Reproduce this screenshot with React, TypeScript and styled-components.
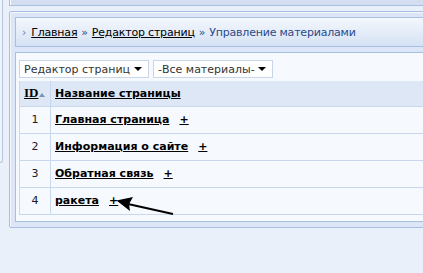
import React from "react";
import styled, { createGlobalStyle } from "styled-components";

const GlobalStyle = createGlobalStyle`
  html, body {
    margin: 0;
    padding: 0;
    background: #eaf0fa;
    overflow: hidden;
  }
  body {
    font-family: "DejaVu Sans", Verdana, sans-serif;
    font-size: 11px;
    color: #000;
  }
`;

interface Page {
  id: number;
  title: string;
}

const pages: Page[] = [
  { id: 1, title: "Главная страница" },
  { id: 2, title: "Информация о сайте" },
  { id: 3, title: "Обратная связь" },
  { id: 4, title: "ракета" },
];

const App: React.FC = () => {
  return (
    <>
      <GlobalStyle />
      <Layout>
        <Sidebar />
        <Main>
          <TopPanel />
          <Panel>
            <Breadcrumbs>
              <Chevron>›</Chevron>
              <Crumb href="#">Главная</Crumb>
              <Sep>»</Sep>
              <Crumb href="#">Редактор страниц</Crumb>
              <Sep>»</Sep>
              <Current>Управление материалами</Current>
            </Breadcrumbs>
            <Content>
              <Filters>
                <Select width={130}>
                  Редактор страниц
                  <Caret />
                </Select>
                <Select width={120}>
                  -Все материалы-
                  <Caret />
                </Select>
              </Filters>
              <Table>
                <thead>
                  <HeadRow>
                    <IdHead>
                      <IdLabel href="#">ID</IdLabel>
                      <SortMark />
                    </IdHead>
                    <NameHead>
                      <Link href="#">Название страницы</Link>
                    </NameHead>
                  </HeadRow>
                </thead>
                <tbody>
                  {pages.map((p) => (
                    <Row key={p.id}>
                      <IdCell>{p.id}</IdCell>
                      <NameCell>
                        <Link href="#">{p.title}</Link>
                        <Plus href="#">+</Plus>
                      </NameCell>
                    </Row>
                  ))}
                </tbody>
              </Table>
            </Content>
          </Panel>
        </Main>
      </Layout>
      <Pointer width="60" height="20" viewBox="0 0 60 20">
        <path d="M57 17 L12 7" stroke="#000" strokeWidth="2" fill="none" />
        <path d="M0.5 3.5 L17 0 L13 7 L14 14 Z" fill="#000" />
      </Pointer>
    </>
  );
};

const Layout = styled.div`
  display: flex;
  align-items: flex-start;
  width: 900px;
`;

const Sidebar = styled.div`
  width: 2px;
  height: 162px;
  background: #eef3fb;
  border-right: 1px solid #b7c7e0;
  border-bottom: 1px solid #b7c7e0;
  border-bottom-right-radius: 3px;
`;

const Main = styled.div`
  flex: 1;
  margin-left: 6px;
  display: flex;
  flex-direction: column;
  gap: 5px;
`;

const TopPanel = styled.div`
  height: 5px;
  background: #d3dff1;
  border: 1px solid #a8bfe4;
  border-top: none;
  box-shadow: inset 1px 0 0 #fff;
`;

const Panel = styled.div`
  background: #dce6f6;
  border: 1px solid #a8bfe4;
  border-radius: 2px;
  box-shadow: inset 1px 1px 0 #f4f7fc;
  padding: 5px;
  display: flex;
  flex-direction: column;
  gap: 5px;
`;

const Breadcrumbs = styled.div`
  height: 28px;
  border: 1px solid #a8bfe4;
  background: linear-gradient(#f4f7fd, #d5e2f4);
  display: flex;
  align-items: center;
  padding-left: 6px;
  gap: 4px;
  font-size: 11px;
  letter-spacing: -0.2px;
`;

const Chevron = styled.span`
  color: #5b7fb8;
  font-size: 11px;
  margin-right: 1px;
`;

const Crumb = styled.a`
  color: #000;
  text-decoration: underline;
`;

const Sep = styled.span`
  color: #2a4a8a;
`;

const Current = styled.span`
  color: #2a4a8a;
`;

const Content = styled.div`
  background: #f6f9fe;
  border: 1px solid #a8bfe4;
  padding: 7px 3px 6px 3px;
  display: flex;
  flex-direction: column;
  gap: 3px;
`;

const Filters = styled.div`
  display: flex;
  gap: 4px;
`;

const Select = styled.div<{ width: number }>`
  width: ${(p) => p.width}px;
  height: 18px;
  box-sizing: border-box;
  background: #fff;
  border: 1px solid #c9d6ea;
  display: flex;
  align-items: center;
  justify-content: space-between;
  padding: 0 6px 0 4px;
  color: #333;
  font-size: 11px;
`;

const Caret = styled.span`
  width: 0;
  height: 0;
  border-left: 4px solid transparent;
  border-right: 4px solid transparent;
  border-top: 4px solid #000;
`;

const Table = styled.table`
  width: 100%;
  border-collapse: collapse;
  border-left: 1px solid #c9d7ee;
`;

const HeadRow = styled.tr`
  background: #dde7f6;
  height: 25px;
  border-bottom: 1px solid #c9d7ee;
`;

const IdHead = styled.th`
  width: 26px;
  padding: 0 0 0 4px;
  text-align: left;
  border-right: 1px solid #c9d7ee;
  white-space: nowrap;
`;

const IdLabel = styled.a`
  font-family: "Liberation Serif", "Times New Roman", serif;
  font-weight: bold;
  font-size: 13px;
  color: #000;
  text-decoration: underline;
`;

const SortMark = styled.span`
  display: inline-block;
  margin-left: 1px;
  width: 0;
  height: 0;
  border-left: 3px solid transparent;
  border-right: 3px solid transparent;
  border-bottom: 4px solid #7d93b3;
`;

const NameHead = styled.th`
  text-align: left;
  padding: 0 0 0 4px;
  font-size: 11px;
`;

const Row = styled.tr`
  height: 27px;
  border-bottom: 1px solid #c9d7ee;
`;

const IdCell = styled.td`
  text-align: center;
  color: #1a1a2a;
  border-right: 1px solid #c9d7ee;
  font-size: 11px;
`;

const NameCell = styled.td`
  padding: 0 0 0 4px;
  white-space: nowrap;
`;

const Link = styled.a`
  font-weight: bold;
  color: #000;
  text-decoration: underline;
`;

const Plus = styled(Link)`
  margin-left: 10px;
`;

const Pointer = styled.svg`
  position: absolute;
  left: 116px;
  top: 197px;
`;

export default App;
